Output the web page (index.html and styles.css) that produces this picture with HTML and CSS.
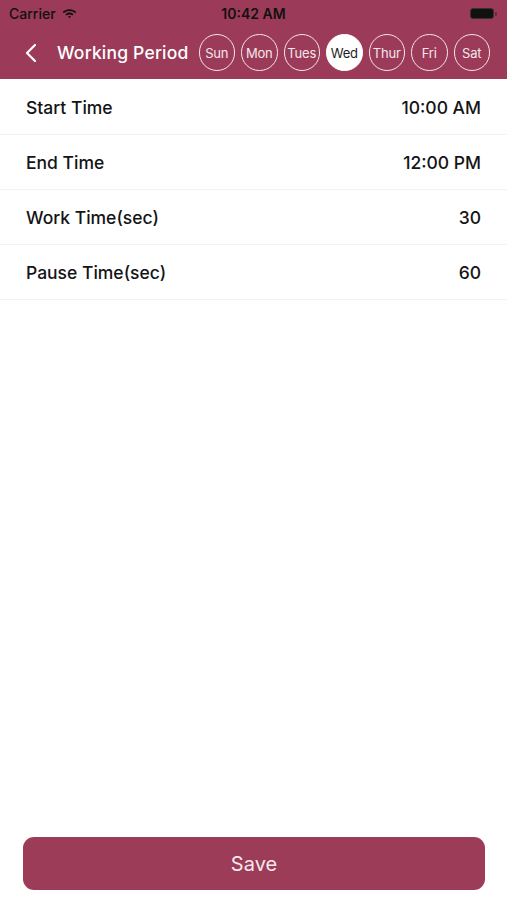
FILE: index.html
```html
<!DOCTYPE html>
<html lang="en">
<head>
    <meta charset="UTF-8">
    <meta name="viewport" content="width=device-width, initial-scale=1.0">
    <title>Working Period</title>
    <link rel="stylesheet" href="styles.css">
</head>
<body>
    <header class="top">
        <div class="status-bar">
            <div class="carrier">
                Carrier
                <svg class="wifi" width="15" height="11" viewBox="0 0 15 11">
                    <path d="M7.5 1.2c2.6 0 5 1 6.8 2.7l-1.2 1.3C11.6 3.8 9.6 3 7.5 3S3.4 3.8 1.9 5.2L.7 3.9C2.5 2.2 4.9 1.2 7.5 1.2z" fill="#111"/>
                    <path d="M7.5 4.6c1.6 0 3 .6 4.1 1.6L10.4 7.5c-.8-.7-1.8-1.1-2.9-1.1s-2.1.4-2.9 1.1L3.4 6.2c1.1-1 2.5-1.6 4.1-1.6z" fill="#111"/>
                    <path d="M7.5 8c.6 0 1.1.2 1.5.6L7.5 10.2 6 8.6c.4-.4.9-.6 1.5-.6z" fill="#111"/>
                </svg>
            </div>
            <div class="clock">10:42 AM</div>
            <div class="battery"><span class="battery-body"></span><span class="battery-nub"></span></div>
        </div>
        <nav class="nav-bar">
            <svg class="back" width="12" height="20" viewBox="0 0 12 20">
                <path d="M10 2 2 10l8 8" fill="none" stroke="#fff" stroke-width="2.2" stroke-linecap="round" stroke-linejoin="round"/>
            </svg>
            <h1 class="title">Working Period</h1>
            <ul class="days">
                <li class="day">Sun</li>
                <li class="day">Mon</li>
                <li class="day">Tues</li>
                <li class="day active">Wed</li>
                <li class="day">Thur</li>
                <li class="day">Fri</li>
                <li class="day">Sat</li>
            </ul>
        </nav>
    </header>
    <main class="settings">
        <div class="row"><span>Start Time</span><span>10:00 AM</span></div>
        <div class="row"><span>End Time</span><span>12:00 PM</span></div>
        <div class="row"><span>Work Time(sec)</span><span>30</span></div>
        <div class="row"><span>Pause Time(sec)</span><span>60</span></div>
    </main>
    <footer class="bottom">
        <button class="save">Save</button>
    </footer>
</body>
</html>
```

FILE: styles.css
```css
html, body {
    height: 100%;
}
body {
    margin: 0;
    font-family: Inter, "Liberation Sans", sans-serif;
    background: #fff;
    color: #1c1c1e;
    display: flex;
    flex-direction: column;
}
.top {
    background-color: #9c3b59;
    height: 79px;
}
.status-bar {
    height: 27px;
    display: grid;
    grid-template-columns: 1fr auto 1fr;
    align-items: center;
    padding: 0 9px;
    font-size: 14px;
    font-weight: 600;
    color: #111;
}
.carrier {
    display: flex;
    align-items: center;
    gap: 6px;
    font-weight: 500;
}
.clock {
    text-align: center;
}
.battery {
    display: flex;
    align-items: center;
    justify-content: flex-end;
    gap: 1px;
    padding-right: 1px;
}
.battery-body {
    width: 22px;
    height: 9px;
    background: #111;
    border: 1px solid #333;
    border-radius: 3px;
}
.battery-nub {
    width: 2px;
    height: 4px;
    background: #6a2a3d;
    border-radius: 0 1px 1px 0;
}
.nav-bar {
    height: 51px;
    display: flex;
    align-items: center;
    padding-left: 25px;
}
.back {
    margin-right: 20px;
}
.title {
    margin: 0;
    color: #fff;
    font-size: 17.5px;
    font-weight: 500;
    letter-spacing: 0.2px;
    white-space: nowrap;
    margin-right: 10px;
}
.days {
    list-style: none;
    margin: 0;
    padding: 0;
    display: flex;
    gap: 6px;
}
.day {
    width: 36.5px;
    height: 36.5px;
    box-sizing: border-box;
    border: 1.5px solid #f4e6ea;
    border-radius: 50%;
    display: flex;
    align-items: center;
    justify-content: center;
    color: #f4e6ea;
    font-size: 13px;
    letter-spacing: -0.2px;
}
.day.active {
    background: #fff;
    border-color: #fff;
    color: #1c1c1e;
}
.settings {
    flex: 1;
    padding-top: 1px;
}
.row {
    height: 55px;
    display: flex;
    align-items: center;
    justify-content: space-between;
    padding: 0 26px;
    font-size: 17.5px;
    font-weight: 450;
    color: #141416;
    border-bottom: 1px solid #f3f3f3;
    box-sizing: border-box;
}
.bottom {
    padding: 0 22px 10px 23px;
}
.save {
    width: 100%;
    height: 53px;
    border: none;
    border-radius: 11px;
    background-color: #9c3c58;
    color: #f8e8ec;
    font-family: Inter, "Liberation Sans", sans-serif;
    font-size: 20px;
}
```
